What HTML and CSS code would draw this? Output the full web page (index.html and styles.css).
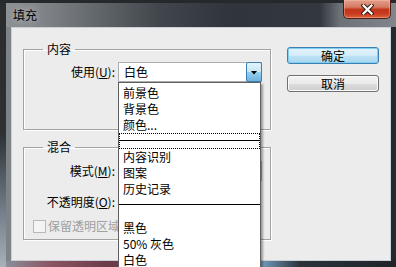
FILE: index.html
```html
<!DOCTYPE html>
<html lang="zh-CN">
<head>
<meta charset="utf-8">
<title>填充</title>
<link rel="stylesheet" href="styles.css">
</head>
<body>
<div class="window">
  <div class="titlebar">
    <span class="title">填充</span>
    <div class="close">
      <svg width="13" height="11" viewBox="0 0 13 11">
        <path d="M2.5 1.5 L10.5 9.5 M10.5 1.5 L2.5 9.5" stroke="#3a1a12" stroke-width="4.2" stroke-linecap="square"/>
        <path d="M2.5 1.5 L10.5 9.5 M10.5 1.5 L2.5 9.5" stroke="#ffffff" stroke-width="2.2" stroke-linecap="square"/>
      </svg>
    </div>
  </div>
  <div class="client">
    <div class="groups">
      <fieldset class="group group-content">
        <legend>内容</legend>
        <div class="row row-use">
          <label class="lbl">使用(<u>U</u>):</label>
          <div class="combo">
            <span class="combo-text">白色</span>
            <span class="arrow"><span class="tri"></span></span>
            <ul class="list">
              <li>前景色</li>
              <li>背景色</li>
              <li>颜色...</li>
              <li class="sep focused"><span class="line"></span></li>
              <li>内容识别</li>
              <li>图案</li>
              <li>历史记录</li>
              <li class="sep"><span class="line"></span></li>
              <li>黑色</li>
              <li>50% 灰色</li>
              <li>白色</li>
            </ul>
          </div>
        </div>
      </fieldset>
      <fieldset class="group group-blend">
        <legend>混合</legend>
        <div class="row row-mode">
          <label class="lbl">模式(<u>M</u>):</label>
          <div class="combo plain"></div>
        </div>
        <div class="row row-opacity">
          <label class="lbl">不透明度(<u>O</u>):</label>
          <div class="field"></div>
        </div>
        <div class="check-row">
          <span class="checkbox"></span><span class="check-text">保留透明区域</span>
        </div>
      </fieldset>
    </div>
    <div class="buttons">
      <button class="btn default">确定</button>
      <button class="btn">取消</button>
    </div>
  </div>
</div>
</body>
</html>
```
FILE: styles.css
```css
html, body {
  margin: 0;
  padding: 0;
}
body {
  width: 396px;
  height: 267px;
  overflow: hidden;
  background: #2a2d30;
  font-family: "Noto Sans CJK SC", "Microsoft YaHei", sans-serif;
  font-size: 12px;
  color: #000;
}
.window {
  width: 396px;
  height: 267px;
  display: flex;
  flex-direction: column;
  background:
    linear-gradient(to bottom, #26292c 0, #26292c 3px, transparent 3px) top left / 100% 3px no-repeat,
    linear-gradient(to bottom, #2a2c2e 0, #2e3134 50%, #6f7b86 78%, #a6b1ba 100%) top left / 6px 100% no-repeat,
    linear-gradient(to right, #8e9296 0, #878b8f 30px, #60656a 100px, #41464c 160px, #30353b 230px, #32383e 320px, #6c7278 340px, #80868b 396px) top left / 100% 27px no-repeat,
    linear-gradient(to right, #8a96a0 0, #8b5563 50px, #6a3a48 110px, #a15a6a 205px, #9cc4e2 225px, #7aa6c8 258px, #2a323a 300px, #1f2428 396px) bottom left / 100% 6px no-repeat,
    linear-gradient(to right, #7e8388 0, #7e8388 11px, #24292e 11px);
}
.titlebar {
  height: 27px;
  display: flex;
  align-items: flex-start;
  padding-left: 13px;
  flex: none;
}
.title {
  padding-top: 6px;
  line-height: 17px;
  font-size: 12px;
  color: #000;
  text-shadow: 0 0 6px rgba(255, 255, 255, 0.55);
}
.close {
  margin-left: auto;
  margin-right: 5px;
  width: 48px;
  height: 19px;
  box-sizing: border-box;
  border: 1px solid #4a1f17;
  border-top: none;
  border-radius: 0 0 5px 5px;
  background: linear-gradient(to bottom, #e2a08c 0, #d47a62 40%, #c1361c 52%, #c63a1f 75%, #e0613c 100%);
  box-shadow: inset 0 0 0 1px rgba(255, 190, 170, 0.45);
  display: flex;
  align-items: center;
  justify-content: center;
}
.close svg {
  display: block;
}
.client {
  flex: 1;
  margin: 0 5px 6px 11px;
  border: 1px solid #c9cfd4;
  background: #ececec;
  display: flex;
  align-items: flex-start;
}
.groups {
  margin-left: 11px;
  margin-top: 14px;
  width: 248px;
  display: flex;
  flex-direction: column;
}
.group {
  margin: 0;
  padding: 0;
  min-width: 0;
  width: 248px;
  box-sizing: border-box;
  border: 1px solid #a3a3a3;
  box-shadow: 1px 1px 0 #ffffff, inset 1px 1px 0 #ffffff;
}
.group legend {
  margin-left: 19px;
  padding: 0 4px;
  line-height: 14px;
  font-size: 12px;
}
.group-content {
  padding-bottom: 47px;
}
.group-blend {
  margin-top: 10px;
  padding-bottom: 6px;
}
.row {
  display: flex;
  align-items: center;
  height: 20px;
}
.row-use {
  margin-top: 6px;
}
.row-mode {
  margin-top: 7px;
}
.row-opacity {
  margin-top: 11px;
}
.lbl {
  width: 91px;
  margin-right: 3px;
  text-align: right;
  line-height: 16px;
  white-space: nowrap;
}
.lbl u {
  text-decoration: underline;
  text-underline-offset: 1px;
}
.combo {
  position: relative;
  width: 144px;
  height: 20px;
  box-sizing: border-box;
  border: 1px solid #abadb3;
  background: #fff;
  display: flex;
  align-items: center;
}
.combo-text {
  flex: 1;
  padding-left: 5px;
  line-height: 16px;
}
.arrow {
  width: 16px;
  height: 20px;
  box-sizing: border-box;
  margin: -1px -1px -1px 0;
  border: 1px solid #3c7fb1;
  border-radius: 2px;
  background: linear-gradient(to bottom, #e5f4fc 0, #c4e5f6 50%, #98d1ef 50%, #6fb3de 100%);
  display: flex;
  align-items: center;
  justify-content: center;
}
.tri {
  width: 7px;
  height: 4px;
  background: #000;
  clip-path: polygon(0 0, 100% 0, 50% 100%);
  margin-top: 1px;
}
.list {
  position: absolute;
  z-index: 10;
  top: 19px;
  left: -1px;
  width: 143px;
  box-sizing: border-box;
  margin: 0;
  padding: 2px 0 0 0;
  list-style: none;
  background: #fff;
  border: 1px solid #5f5f5f;
  box-shadow: 2px 2px 2px rgba(0, 0, 0, 0.35);
}
.list li {
  height: 16px;
  line-height: 16px;
  padding-left: 4px;
  white-space: nowrap;
}
.list li.sep {
  padding-left: 0;
  box-sizing: border-box;
}
.list li.sep .line {
  display: block;
  height: 1px;
  margin-top: 7px;
  background: #000;
}
.list li.sep.focused {
  border: 1px dotted #000;
}
.list li.sep.focused .line {
  margin-top: 6px;
}
.field {
  width: 40px;
  height: 20px;
  box-sizing: border-box;
  border: 1px solid #abadb3;
  background: #fff;
}
.check-row {
  display: flex;
  align-items: center;
  height: 14px;
  margin-top: 7px;
  padding-left: 9px;
  color: #a0a0a0;
}
.checkbox {
  width: 13px;
  height: 13px;
  box-sizing: border-box;
  border: 1px solid #b8b8b8;
  background: #f4f4f4;
  margin-right: 2px;
}
.check-text {
  line-height: 14px;
  white-space: nowrap;
}
.buttons {
  margin-left: 16px;
  margin-top: 19px;
  width: 92px;
  display: flex;
  flex-direction: column;
  gap: 11px;
}
.btn {
  width: 92px;
  height: 17px;
  box-sizing: border-box;
  padding: 0;
  margin: 0;
  border: 1px solid #707070;
  border-radius: 3px;
  background: linear-gradient(to bottom, #f2f2f2 0, #ebebeb 50%, #dddddd 50%, #cfcfcf 100%);
  box-shadow: inset 0 0 0 1px #fbfbfb;
  font-family: "Noto Sans CJK SC", "Microsoft YaHei", sans-serif;
  font-size: 12px;
  line-height: 15px;
  color: #000;
}
.btn.default {
  border-color: #3c7fb1;
  background: linear-gradient(to bottom, #e6f4fb 0, #d3ecf9 50%, #bde2f5 50%, #a9d7ef 100%);
  box-shadow: inset 0 0 0 1px #7fd0f4;
}
```
